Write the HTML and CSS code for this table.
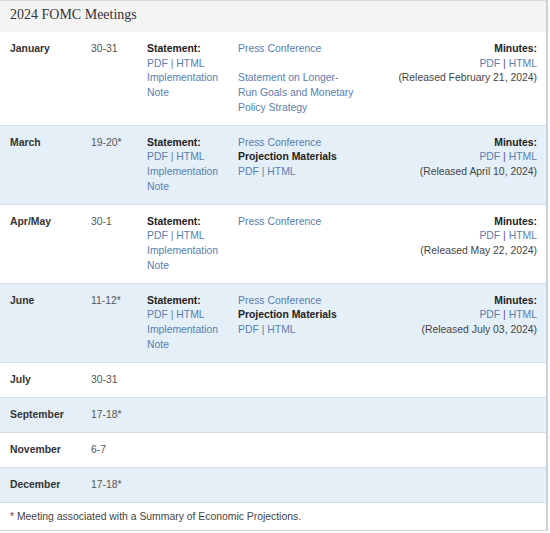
FILE: index.html
```html
<!DOCTYPE html>
<html>
<head>
<meta charset="utf-8">
<link rel="stylesheet" href="styles.css">
</head>
<body>
<div class="panel">
  <div class="heading">2024 FOMC Meetings</div>

  <div class="row">
    <div class="month">January</div>
    <div class="date">30-31</div>
    <div class="stmt"><strong>Statement:</strong><br><a>PDF</a> <span class="sep">|</span> <a>HTML</a><br><a>Implementation Note</a></div>
    <div class="press"><a>Press Conference</a><p class="gap"><a>Statement on Longer-Run Goals and Monetary Policy Strategy</a></p></div>
    <div class="minutes"><strong>Minutes:</strong><br><a>PDF</a> <span class="sep2">|</span> <a>HTML</a><br>(Released February 21, 2024)</div>
  </div>

  <div class="row alt">
    <div class="month">March</div>
    <div class="date">19-20*</div>
    <div class="stmt"><strong>Statement:</strong><br><a>PDF</a> <span class="sep">|</span> <a>HTML</a><br><a>Implementation Note</a></div>
    <div class="press"><a>Press Conference</a><br><strong>Projection Materials</strong><br><a>PDF</a> <span class="sep">|</span> <a>HTML</a></div>
    <div class="minutes"><strong>Minutes:</strong><br><a>PDF</a> <span class="sep2">|</span> <a>HTML</a><br>(Released April 10, 2024)</div>
  </div>

  <div class="row">
    <div class="month">Apr/May</div>
    <div class="date">30-1</div>
    <div class="stmt"><strong>Statement:</strong><br><a>PDF</a> <span class="sep">|</span> <a>HTML</a><br><a>Implementation Note</a></div>
    <div class="press"><a>Press Conference</a></div>
    <div class="minutes"><strong>Minutes:</strong><br><a>PDF</a> <span class="sep2">|</span> <a>HTML</a><br>(Released May 22, 2024)</div>
  </div>

  <div class="row alt">
    <div class="month">June</div>
    <div class="date">11-12*</div>
    <div class="stmt"><strong>Statement:</strong><br><a>PDF</a> <span class="sep">|</span> <a>HTML</a><br><a>Implementation Note</a></div>
    <div class="press"><a>Press Conference</a><br><strong>Projection Materials</strong><br><a>PDF</a> <span class="sep">|</span> <a>HTML</a></div>
    <div class="minutes"><strong>Minutes:</strong><br><a>PDF</a> <span class="sep2">|</span> <a>HTML</a><br>(Released July 03, 2024)</div>
  </div>

  <div class="row">
    <div class="month">July</div>
    <div class="date">30-31</div>
  </div>
  <div class="row alt">
    <div class="month">September</div>
    <div class="date">17-18*</div>
  </div>
  <div class="row">
    <div class="month">November</div>
    <div class="date">6-7</div>
  </div>
  <div class="row alt">
    <div class="month">December</div>
    <div class="date">17-18*</div>
  </div>

  <div class="footer"><span class="ast">*</span> Meeting associated with a Summary of Economic Projections.</div>
</div>
</body>
</html>
```
FILE: styles.css
```css
html, body {
  margin: 0;
  padding: 0;
  background: #ffffff;
}
body {
  font-family: "Liberation Sans", Arial, sans-serif;
  font-size: 10.4px;
  line-height: 14.667px;
  color: #3a3a3a;
}
.panel {
  width: 546px;
  border-top: 1px solid #d5d9de;
  border-right: 2px solid #c9d0d8;
  border-bottom: 1px solid #d0d4d8;
}
.heading {
  background: #f4f4f4;
  height: 31px;
  line-height: 27px;
  padding-left: 10px;
  font-family: "Liberation Serif", "Times New Roman", serif;
  font-size: 14px;
  color: #333333;
}
.row {
  display: grid;
  grid-template-columns: 81px 56px 91px 1fr auto;
  padding: 10px 9px 9.333px 10px;
  border-bottom: 1px solid #d4dde7;
  background: #ffffff;
}
.row.alt {
  background: #e5eff8;
}
.month {
  font-weight: bold;
  color: #333333;
}
.date {
  color: #555555;
}
.stmt strong, .press strong, .minutes strong {
  color: #222222;
}
a {
  color: #5a7db1;
  text-decoration: none;
}
.sep {
  color: #6c7f99;
}
.sep2 {
  color: #6b3f8e;
}
.press {
  max-width: 117px;
}
.gap {
  margin: 14.667px 0 0 0;
}
.minutes {
  text-align: right;
  color: #444444;
}
.footer {
  padding: 7px 10px 6px 10px;
  color: #444444;
}
.ast {
  color: #8a2a2a;
}
```
